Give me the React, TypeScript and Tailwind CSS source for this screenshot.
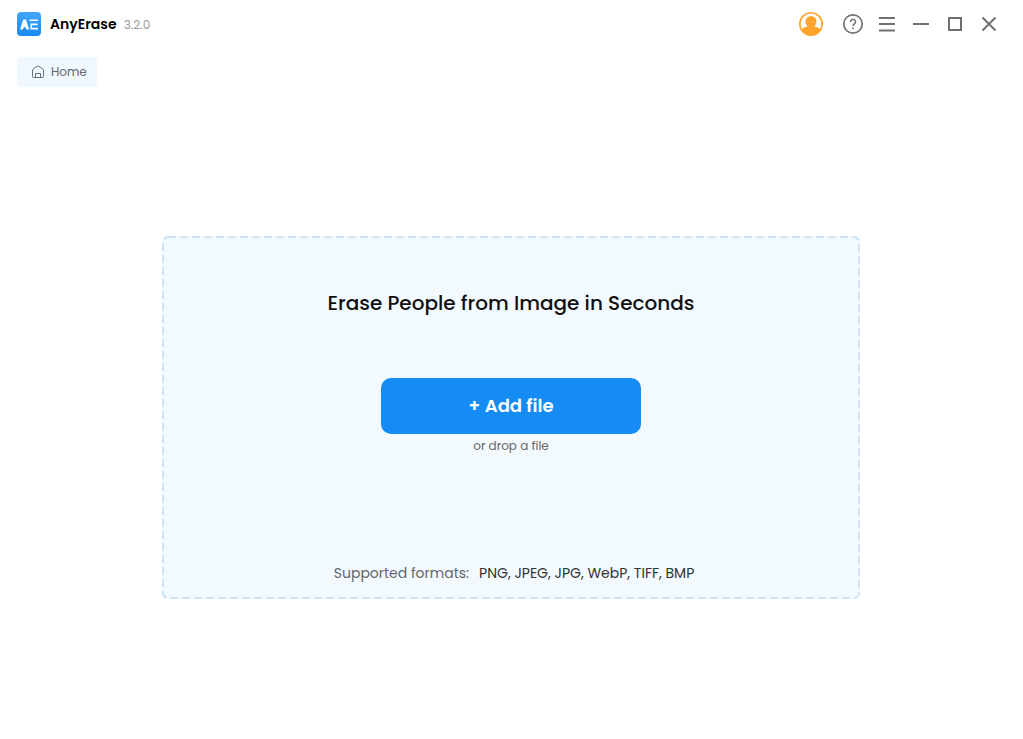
import React from 'react';

const Logo: React.FC = () => (
  <svg width="24" height="24" viewBox="0 0 24 24" aria-hidden="true">
    <defs>
      <linearGradient id="logo-fill" x1="0" y1="0" x2="0" y2="1">
        <stop offset="0" stopColor="#44a6fb" />
        <stop offset="1" stopColor="#168bf2" />
      </linearGradient>
    </defs>
    <rect width="24" height="24" rx="4" fill="url(#logo-fill)" />
    <path d="M3 17.500 6.300 7.500h2.600L12.200 17.500H9.800L7.600 14.600 5.400 17.500Z" fill="#fff" />
    <path d="M12.500 8.300h8.500M13.500 12.400h7M21 16.600h-6.800V12.400" fill="none" stroke="#fff" strokeWidth="1.600" />
  </svg>
);

const AccountIcon: React.FC = () => (
  <svg width="24" height="24" viewBox="0 0 24 24" aria-hidden="true">
    <defs>
      <clipPath id="account-clip">
        <circle cx="12" cy="12" r="11.5" />
      </clipPath>
    </defs>
    <g clipPath="url(#account-clip)" fill="#ffa42e">
      <ellipse cx="12" cy="9.500" rx="5.500" ry="5.600" />
      <path d="M8.500 12h7v2.500c3.200.3 5.200 1.500 5.700 3.500V24H2.800v-6C3.300 16 5.300 14.800 8.500 14.500Z" />
    </g>
    <circle cx="12" cy="12" r="11.200" fill="none" stroke="#ffa42e" strokeWidth="1.600" />
  </svg>
);

const HelpIcon: React.FC = () => (
  <svg width="22" height="22" viewBox="0 0 22 22" fill="none" stroke="#707070" aria-hidden="true">
    <circle cx="11" cy="11" r="9.200" strokeWidth="1.700" />
    <path d="M8.500 8.900a2.500 2.500 0 1 1 3.900 2c-.9.600-1.400 1-1.400 2.200" strokeWidth="1.500" />
    <path d="M11 14.400v1.700" strokeWidth="1.600" />
  </svg>
);

const HomeIcon: React.FC = () => (
  <svg width="14" height="14" viewBox="0 0 14 14" fill="none" stroke="#666b70" aria-hidden="true">
    <path d="M1.500 5.200Q1.500 4.300 2.300 3.800L6.200 1.300Q7 .8 7.800 1.300L11.700 3.800Q12.500 4.300 12.500 5.200V11.500Q12.500 12.500 11.500 12.500H2.500Q1.500 12.500 1.500 11.500Z" />
    <path d="M4.500 12.500V8.500H9.500V12.500" />
  </svg>
);

const windowButtons = [
  { label: 'Menu', path: 'M3 5h16M3 11h16M3 17.500h16' },
  { label: 'Minimize', path: 'M3 11h16' },
  { label: 'Maximize', path: 'M5 5h12v12H5Z' },
  { label: 'Close', path: 'm4.500 4.500 13 13M17.500 4.500l-13 13' },
];

const TitleBar: React.FC = () => (
  <header className="flex h-12 items-center justify-between pl-[17px] pr-[23px]">
    <div className="flex items-center">
      <Logo />
      <div className="ml-[9px] flex items-baseline gap-[7px]">
        <span className="text-sm font-semibold text-black">AnyErase</span>
        <span className="text-xs text-[#999]">3.2.0</span>
      </div>
    </div>
    <div className="flex items-center gap-3">
      <button type="button" aria-label="Account" className="mr-[7px]">
        <AccountIcon />
      </button>
      <button type="button" aria-label="Help">
        <HelpIcon />
      </button>
      {windowButtons.map(({ label, path }) => (
        <button key={label} type="button" aria-label={label}>
          <svg width="22" height="22" viewBox="0 0 22 22" fill="none" stroke="#707070" strokeWidth="2" aria-hidden="true">
            <path d={path} />
          </svg>
        </button>
      ))}
    </div>
  </header>
);

const DropZone: React.FC = () => (
  <section className="relative flex h-[363px] w-full max-w-[698px] flex-col items-center rounded-md bg-[#f2f9ff]">
    {/* Dashed outline */}
    <svg className="pointer-events-none absolute inset-0 h-full w-full p-px" overflow="visible" aria-hidden="true">
      <rect width="100%" height="100%" rx="5" fill="none" stroke="#d0e3f4" strokeWidth="2" strokeDasharray="8 4" />
    </svg>

    <h1 className="mt-[52px] text-xl font-medium leading-[30px] text-[#111]">
      Erase People from Image in Seconds
    </h1>
    <button
      type="button"
      className="mt-[60px] h-14 w-[260px] shrink-0 rounded-[10px] bg-[#148cf3] text-lg font-semibold text-white"
    >
      + Add file
    </button>
    <p className="mt-1 text-xs text-[#666]">or drop a file</p>
    <p className="mb-4 ml-[6px] mt-auto flex gap-[10px] text-sm text-[#333]">
      <span className="text-[#666]">Supported formats:</span>
      <span>PNG, JPEG, JPG, WebP, TIFF, BMP</span>
    </p>
  </section>
);

const App: React.FC = () => {
  return (
    <div className="flex min-h-screen flex-col bg-white font-[Poppins,Inter,sans-serif]">
      <TitleBar />
      <nav className="flex h-12 items-center pl-[17px]">
        <button
          type="button"
          className="flex h-[30px] w-20 items-center gap-[6px] rounded-sm bg-[#eff7ff] pl-[14px] text-xs text-[#666]"
        >
          <HomeIcon />
          Home
        </button>
      </nav>
      <main className="flex flex-1 items-center justify-center pl-6 pr-[25px]">
        <DropZone />
      </main>
    </div>
  );
};

export default App;
